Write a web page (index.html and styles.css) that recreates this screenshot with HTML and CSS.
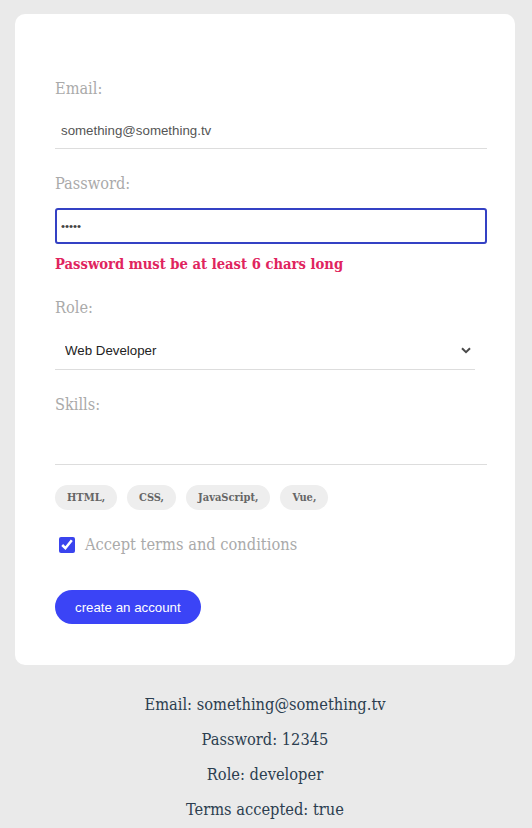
FILE: index.html
```html
<!DOCTYPE html>
<html lang="en">
<head>
<meta charset="utf-8">
<title>Sign up</title>
<link rel="stylesheet" href="styles.css">
</head>
<body>
<div class="page">
  <form class="card">
    <label class="field-label">Email:</label>
    <input class="text-input" type="email" value="something@something.tv">

    <label class="field-label">Password:</label>
    <input class="text-input is-focused" type="password" value="12345">
    <div class="error">Password must be at least 6 chars long</div>

    <label class="field-label">Role:</label>
    <div class="select-wrap">
      <select class="select">
        <option>Web Developer</option>
      </select>
      <svg class="chevron" width="10" height="7" viewBox="0 0 10 7"><polyline points="1,1.2 5,5.2 9,1.2" fill="none" stroke="#4a4a4a" stroke-width="2"/></svg>
    </div>

    <label class="field-label">Skills:</label>
    <input class="text-input" type="text" value="">

    <div class="pills">
      <span class="pill">HTML,</span>
      <span class="pill">CSS,</span>
      <span class="pill">JavaScript,</span>
      <span class="pill">Vue,</span>
    </div>

    <div class="terms">
      <input class="check" type="checkbox" checked>
      <span class="terms-text">Accept terms and conditions</span>
    </div>

    <div class="submit">
      <button class="btn" type="button">create an account</button>
    </div>
  </form>

  <div class="summary">
    <p>Email: something@something.tv</p>
    <p>Password: 12345</p>
    <p>Role: developer</p>
    <p>Terms accepted: true</p>
  </div>
</div>
</body>
</html>
```
FILE: styles.css
```css
html, body {
  margin: 0;
  padding: 0;
  background: #eaeaea;
}
body {
  font-family: "DejaVu Serif Condensed", "DejaVu Serif", serif;
  color: #2c3e50;
}
.page {
  padding: 14px 17px 0 15px;
}
.card {
  background: #fff;
  border-radius: 10px;
  padding: 40px 40px 41px 40px;
  width: 420px;
}
.field-label {
  display: block;
  margin: 25px 0 15px;
  font-size: 16.2px;
  line-height: 19px;
  color: #aaa;
}
.text-input {
  display: block;
  width: 100%;
  box-sizing: content-box;
  height: 15px;
  padding: 10px 6px;
  margin: 0;
  border: none;
  border-bottom: 1px solid #ddd;
  font-family: "Liberation Sans", Arial, sans-serif;
  font-size: 13.3px;
  color: #555;
  background: #fff;
  outline: none;
}
.text-input.is-focused {
  outline: 2px solid #3441c4;
  outline-offset: -2px;
  border-radius: 3px;
  color: #444;
  font-size: 11.5px;
}
.error {
  margin-top: 10px;
  font-size: 14.65px;
  line-height: 19px;
  font-weight: bold;
  color: #e0245e;
}
.select-wrap {
  position: relative;
}
.select {
  display: block;
  width: 100%;
  height: 38px;
  box-sizing: border-box;
  padding: 0 10px;
  margin: 0;
  border: none;
  border-bottom: 1px solid #ddd;
  border-radius: 0;
  background: #fff;
  -webkit-appearance: none;
  appearance: none;
  font-family: "Liberation Sans", Arial, sans-serif;
  font-size: 13.3px;
  color: #222;
  outline: none;
}
.chevron {
  position: absolute;
  right: 4px;
  top: 15px;
}
.pills {
  margin-top: 20px;
  display: flex;
  gap: 10px;
}
.pill {
  display: inline-block;
  padding: 6px 12px;
  border-radius: 20px;
  background: #eee;
  color: #666;
  font-size: 11px;
  line-height: 13px;
  font-weight: bold;
}
.terms {
  margin-top: 25px;
  display: flex;
  align-items: center;
  height: 20px;
}
.check {
  width: 16px;
  height: 16px;
  margin: 0 10px 0 4px;
  accent-color: #3a44ee;
}
.terms-text {
  font-size: 16.3px;
  line-height: 20px;
  color: #aaa;
}
.submit {
  margin-top: 35px;
}
.btn {
  display: block;
  height: 34px;
  padding: 0 20px;
  border: none;
  border-radius: 20px;
  background: #3b44f6;
  color: #fff;
  font-family: "Liberation Sans", Arial, sans-serif;
  font-size: 13.3px;
}
.summary {
  margin-top: 30px;
  text-align: center;
}
.summary p {
  margin: 16px 0;
  font-size: 16.3px;
  line-height: 19px;
}
.summary p:first-child {
  margin-top: 0;
}
```
